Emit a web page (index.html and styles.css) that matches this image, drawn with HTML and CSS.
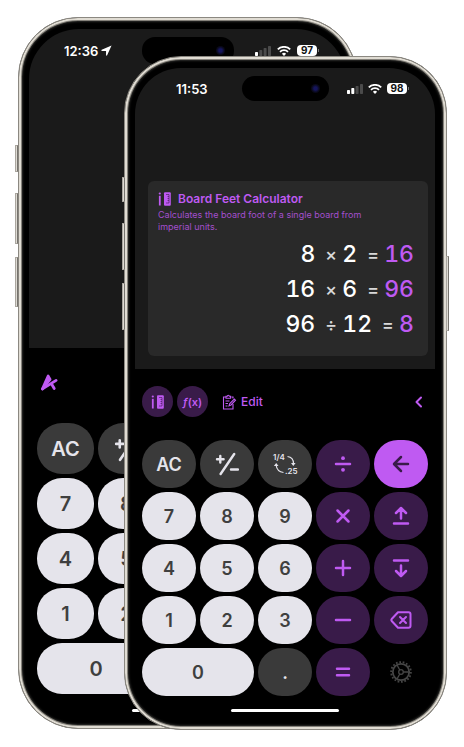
FILE: index.html
```html
<!DOCTYPE html>
<html lang="en">
<head>
<meta charset="utf-8">
<meta name="viewport" content="width=device-width, initial-scale=1">
<title>Board Feet Calculator</title>
<link rel="stylesheet" href="styles.css">
</head>
<body>
<svg class="sprite" aria-hidden="true">
  <symbol id="signal" viewBox="0 0 16 10">
    <rect x="0" y="6" width="3" height="4" rx=".7"/>
    <rect class="dim" x="4.3" y="4" width="3" height="6" rx=".7"/>
    <rect class="faint" x="8.6" y="2" width="3" height="8" rx=".7"/>
    <rect class="faint" x="13" y="0" width="3" height="10" rx=".7"/>
  </symbol>
  <symbol id="wifi" viewBox="0 0 14 10">
    <path d="M.8 3.400a8.800 8.800 0 0 1 12.400 0M3 5.800a5.700 5.700 0 0 1 8 0" fill="none" stroke="currentColor" stroke-width="1.800"/>
    <path d="M4.900 7.700a3 3 0 0 1 4.200 0L7 9.900z"/>
  </symbol>
  <symbol id="plusminus" viewBox="0 0 24 24">
    <path d="M5.300 4v6.600M2 7.300h6.600M19.200 2 5.600 22M16 17.500h7" fill="none" stroke="currentColor" stroke-width="2.400" stroke-linecap="round"/>
  </symbol>
  <symbol id="ruler" viewBox="0 0 13 14">
    <path d="M1.800 3.800v9.700" fill="none" stroke="currentColor" stroke-width="1.800"/>
    <circle cx="1.800" cy="1.500" r="1.100"/>
    <rect x="6" y=".3" width="6.800" height="13.400" rx="1"/>
    <path class="ticks" d="M8 2.500h3M9.500 4.500H11M9.500 6.500H11M9.500 8.500H11M8 11h3M11 2.500V11" fill="none" stroke-width=".6"/>
  </symbol>
</svg>

<main class="scene">
  <section class="phone back" aria-label="Calculator">
    <span class="side side-a"></span><span class="side side-b"></span><span class="side side-c"></span>
    <div class="screen">
      <div class="display">
        <div class="status">
          <div class="time">12:36
            <svg class="location" viewBox="0 0 12 12" aria-hidden="true"><path d="M11.500.5.8 5.300c-.6.3-.5 1.200.2 1.200h4.500V11c0 .7.900.8 1.200.2z"/></svg>
          </div>
          <div class="island"><span class="lens"></span></div>
          <div class="indicators one-bar">
            <svg class="signal"><use href="#signal"/></svg>
            <svg class="wifi"><use href="#wifi"/></svg>
            <span class="battery">97</span>
          </div>
        </div>
      </div>
      <div class="toolbar">
        <button class="plain" aria-label="Tools">
          <svg class="brand" viewBox="0 0 18 18" aria-hidden="true">
            <path d="M1.600 15.800 7.600 2.200 9.600 5.800z"/>
            <path d="M1.600 15.800 16 6.800M11.200 10.500 14 15.300" fill="none"/>
          </svg>
        </button>
      </div>
      <div class="keys">
        <button class="key gray first">AC</button>
        <button class="key gray" aria-label="Plus or minus"><svg class="pm"><use href="#plusminus"/></svg></button>
        <button class="key first">7</button><button class="key">8</button>
        <button class="key first">4</button><button class="key">5</button>
        <button class="key first">1</button><button class="key">2</button>
        <button class="key first wide">0</button>
      </div>
      <div class="home"></div>
    </div>
  </section>

  <section class="phone front" aria-label="Board feet calculator">
    <span class="side side-a"></span><span class="side side-b"></span><span class="side side-c"></span><span class="side power"></span>
    <div class="screen">
      <div class="display">
        <div class="status">
          <div class="time">11:53</div>
          <div class="island"><span class="lens"></span></div>
          <div class="indicators">
            <svg class="signal"><use href="#signal"/></svg>
            <svg class="wifi"><use href="#wifi"/></svg>
            <span class="battery">98</span>
          </div>
        </div>
        <article class="card">
          <h1><svg class="ruler"><use href="#ruler"/></svg>Board Feet Calculator</h1>
          <p>Calculates the board foot of a single board from imperial units.</p>
          <div class="sums">
            <div class="sum">8<i>×</i>2<i>=</i><output>16</output></div>
            <div class="sum">16<i>×</i>6<i>=</i><output>96</output></div>
            <div class="sum">96<i>÷</i>12<i>=</i><output>8</output></div>
          </div>
        </article>
      </div>
      <div class="toolbar">
        <button class="round" aria-label="Board feet"><svg class="ruler"><use href="#ruler"/></svg></button>
        <button class="round fx"><span><i>ƒ</i>(x)</span></button>
        <button class="plain edit">
          <svg class="clip" viewBox="0 0 14 16" aria-hidden="true">
            <path d="M9.500 3h1.500v1.500M4 3H1.500v12H11V10"/>
            <path d="M4 4.200V2.300h1.300a1 1 0 0 1 2 0h1.300v1.900zM3.500 7h4M3.500 9.500h2.500M3.500 12h2"/>
            <path d="m7 11.800.6-2L12.300 5l1.200 1.200L9 11z"/>
          </svg>Edit
        </button>
        <button class="plain collapse" aria-label="Collapse">
          <svg viewBox="0 0 8 12"><path d="M6 1.500 1.500 6 6 10.500"/></svg>
        </button>
      </div>
      <div class="keys">
        <button class="key gray">AC</button>
        <button class="key gray" aria-label="Plus or minus"><svg class="pm"><use href="#plusminus"/></svg></button>
        <button class="key gray" aria-label="Fraction to decimal">
          <svg class="convert" viewBox="0 0 26 24" aria-hidden="true">
            <text x="1" y="8">1/4</text><text x="13" y="22">.25</text>
            <path d="M15.500 4.500q6 .8 6 7M11.500 20.500q-6.500-.8-7.300-7" fill="none" stroke="currentColor" stroke-width="1.200"/>
            <path d="M19 11h4.600l-2.300 3zM1.900 14h4.600L4.200 11z"/>
          </svg>
        </button>
        <button class="key violet" aria-label="Divide"><svg class="op" viewBox="0 0 18 18"><path d="M2 9h14"/><circle cx="9" cy="3.200" r="1.900"/><circle cx="9" cy="14.800" r="1.900"/></svg></button>
        <button class="key bright" aria-label="Back"><svg class="op" viewBox="0 0 18 18"><path d="M16 9H2.500M9 2 2 9l7 7"/></svg></button>
        <button class="key">7</button><button class="key">8</button><button class="key">9</button>
        <button class="key violet" aria-label="Multiply"><svg class="op" viewBox="0 0 18 18"><path d="m3.500 3.500 11 11M14.500 3.500l-11 11"/></svg></button>
        <button class="key violet" aria-label="Move up"><svg class="op" viewBox="0 0 18 18"><path d="M9 11.500V1.500M4 6l5-5 5 5M2 16.500h14"/></svg></button>
        <button class="key">4</button><button class="key">5</button><button class="key">6</button>
        <button class="key violet" aria-label="Add"><svg class="op" viewBox="0 0 18 18"><path d="M2 9h14M9 2v14"/></svg></button>
        <button class="key violet" aria-label="Move down"><svg class="op" viewBox="0 0 18 18"><path d="M9 6.500v10M4 12l5 5 5-5M2 1.500h14"/></svg></button>
        <button class="key">1</button><button class="key">2</button><button class="key">3</button>
        <button class="key violet" aria-label="Subtract"><svg class="op" viewBox="0 0 18 18"><path d="M2 9h14"/></svg></button>
        <button class="key violet" aria-label="Delete"><svg class="erase" viewBox="0 0 22 18"><path d="M8 1.200h10.500a2 2 0 0 1 2 2v11.600a2 2 0 0 1-2 2H8L1.700 10a1.500 1.500 0 0 1 0-2zM10 6l6 6M16 6l-6 6"/></svg></button>
        <button class="key wide">0</button>
        <button class="key gray">.</button>
        <button class="key violet" aria-label="Equals"><svg class="op" viewBox="0 0 18 18"><path d="M3 5.800h12M3 12.200h12"/></svg></button>
        <button class="key bare" aria-label="Settings">
          <svg class="gear" viewBox="0 0 22 22">
            <circle class="teeth" cx="11" cy="11" r="9.900" pathLength="36"/>
            <circle cx="11" cy="11" r="8.200" stroke-width="1.800"/>
            <circle cx="11" cy="11" r="2.300" stroke-width="1.300"/>
            <path d="M13.300 11h5.500M9.800 9 7 4M9.800 13 7 18" stroke-width="1.300"/>
          </svg>
        </button>
      </div>
      <div class="home"></div>
    </div>
  </section>
</main>
</body>
</html>
```
FILE: styles.css
```css
* { box-sizing: border-box; }

body {
  margin: 0;
  background: #fff;
  font-family: Inter, "Liberation Sans", sans-serif;
}

.sprite { position: absolute; width: 0; height: 0; }
svg { display: block; fill: currentColor; overflow: visible; }

.scene { display: grid; align-items: start; }

/* Phone shells share one grid cell so that the second overlaps the first. */
.phone {
  grid-area: 1 / 1;
  position: relative;
  border: 1px solid #8b8881;
  background: #000;
  box-shadow: inset 0 0 0 2px #e0dcd3, inset 0 0 0 3px #85827b, inset 0 0 2px 4px #2b2b29;
}
.back { margin: 17px 107px 0 18px; padding: 11px 10px; border-radius: 60px; }
.front { margin: 56px 17px 0 124px; padding: 11px 11px 11px 10px; border-radius: 57px; }

.side {
  position: absolute;
  left: -4px;
  width: 3px;
  border: 1px solid #aaa69f;
  border-right-color: #77746e;
  background: #dedbd4;
}
.back .side-a { top: 127px; height: 27px; }
.back .side-b { top: 175px; height: 51px; }
.back .side-c { top: 239px; height: 50px; }
.front .side { left: -3px; }
.front .side-a { top: 120px; height: 25px; }
.front .side-b { top: 166px; height: 47px; }
.front .side-c { top: 226px; height: 47px; }
.front .power { top: 199px; left: auto; right: -3px; height: 75px; }

.screen { overflow: hidden; color: #fff; }
.back .screen { border-radius: 50px; }
.front .screen { border-radius: 46px; }

.display { background: #1a1a1a; }
.back .display { height: 319px; padding-top: 8px; }
.front .display { padding: 8px 7px 13px 13px; }

/* Status bar */
.status { display: grid; grid-template-columns: 1fr auto 1fr; align-items: center; }
.back .status { padding: 0 29px; }
.front .status { margin: 0 -7px 0 -13px; padding: 0 28px; }
.time { display: flex; align-items: center; gap: 3px; font-size: 13px; font-weight: 600; line-height: 16px; }
.back .time { padding-left: 6px; }
.front .time { padding-left: 13px; }
.location { width: 11px; height: 11px; }
.island {
  display: flex;
  justify-content: flex-end;
  align-items: center;
  width: 87px;
  height: 25px;
  padding-right: 9px;
  border-radius: 13px;
  background: #000;
}
.back .island { width: 92px; height: 27px; }
.lens { width: 9px; height: 9px; border-radius: 50%; background: radial-gradient(circle, #15155c 25%, #090919 60%); }
.indicators { display: flex; justify-content: flex-end; align-items: center; gap: 5px; }
.signal { width: 16px; height: 10px; }
.wifi { width: 14px; height: 10px; }
.dim { fill: var(--second-bar, #fff); }
.faint { fill: #4b4b4b; }
.one-bar { --second-bar: #4b4b4b; gap: 6px; }
.battery {
  position: relative;
  width: 20px;
  border-radius: 4px;
  background: #fff;
  color: #111;
  font-size: 10px;
  font-weight: 700;
  line-height: 11px;
  text-align: center;
}
.battery::after {
  content: "";
  position: absolute;
  top: 4px;
  right: -2px;
  width: 1px;
  height: 3px;
  background: #777;
}

/* Result card */
.card {
  margin-top: 80px;
  padding: 10px 14px 14px 10px;
  border-radius: 6px;
  background: #292929;
}
.card h1 {
  display: flex;
  align-items: center;
  gap: 7px;
  margin: 0;
  color: #bf5af2;
  font-size: 12px;
  font-weight: 600;
  line-height: 16px;
}
.ruler { width: 13px; height: 14px; color: #bf5af2; }
.ticks { stroke: #39194a; }
.card p { max-width: 220px; margin: 2px 0 4px; color: #a44fce; font-size: 9px; line-height: 12px; }
.sum {
  display: flex;
  justify-content: flex-end;
  align-items: center;
  font-size: 23px;
  font-weight: 500;
  font-variant-numeric: tabular-nums;
  line-height: 35px;
}
.sum i { width: 11px; margin: 0 6px 0 10px; color: #d8d8d8; font-size: 18px; font-style: normal; text-align: center; }
.sum output { color: #bf5af2; }

/* Toolbar */
.toolbar { display: flex; align-items: center; background: #000; color: #bf5af2; }
.back .toolbar { padding: 26px 12px 32px; }
.front .toolbar { gap: 4px; padding: 17px 7px 23px; }
button { margin: 0; padding: 0; border: 0; background: none; color: inherit; font-family: inherit; }
.brand {
  width: 17px;
  height: 17px;
  stroke: currentColor;
  stroke-width: 3;
  stroke-linecap: round;
  stroke-linejoin: round;
}
.round { display: grid; place-items: center; width: 31px; height: 31px; border-radius: 50%; background: #391b49; }
.fx { font-size: 11px; font-weight: 600; }
.edit { display: flex; align-items: center; gap: 5px; margin-left: 10px; font-size: 12px; font-weight: 500; }
.clip { width: 14px; height: 16px; fill: none; stroke: currentColor; stroke-width: 1.1; }
.collapse { margin: 0 5px 0 auto; }
.collapse svg {
  width: 8px;
  height: 12px;
  fill: none;
  stroke: currentColor;
  stroke-width: 2;
  stroke-linecap: round;
  stroke-linejoin: round;
}

/* Keypad */
.keys { display: grid; grid-template-columns: repeat(5, 1fr); gap: 4px; background: #000; }
.back .keys { grid-auto-rows: 51px; padding: 0 8px; }
.front .keys { grid-auto-rows: 48px; padding: 0 7px; }
.key {
  display: grid;
  place-items: center;
  border-radius: 25px;
  background: #e5e4eb;
  color: #3f3f3f;
  font-size: 18px;
  font-weight: 600;
}
.back .key { font-size: 20px; }
.first { grid-column-start: 1; }
.wide { grid-column-end: span 2; }
.gray { background: #3a3a3a; color: #e5e4eb; }
.violet { background: #391b49; color: #bf5af2; }
.bright { background: #bf5af2; color: #391b49; }
.bare { background: none; color: #464646; }
.pm { width: 24px; height: 24px; }
.back .pm { width: 26px; height: 26px; }
.op { width: 18px; height: 18px; }
.erase { width: 22px; height: 18px; }
.op path, .erase path { fill: none; stroke: currentColor; stroke-width: 2.5; stroke-linecap: round; stroke-linejoin: round; }
.erase path { stroke-width: 2; }
.convert { width: 26px; height: 24px; font-size: 8px; }
.gear { width: 22px; height: 22px; fill: none; stroke: currentColor; }
.teeth { stroke-width: 1.8; stroke-dasharray: 1 1; }

.home { width: 108px; height: 3px; margin: 13px auto 6px; border-radius: 2px; background: #fff; }
.back .home { width: 112px; margin: 15px auto 5px; }
```
